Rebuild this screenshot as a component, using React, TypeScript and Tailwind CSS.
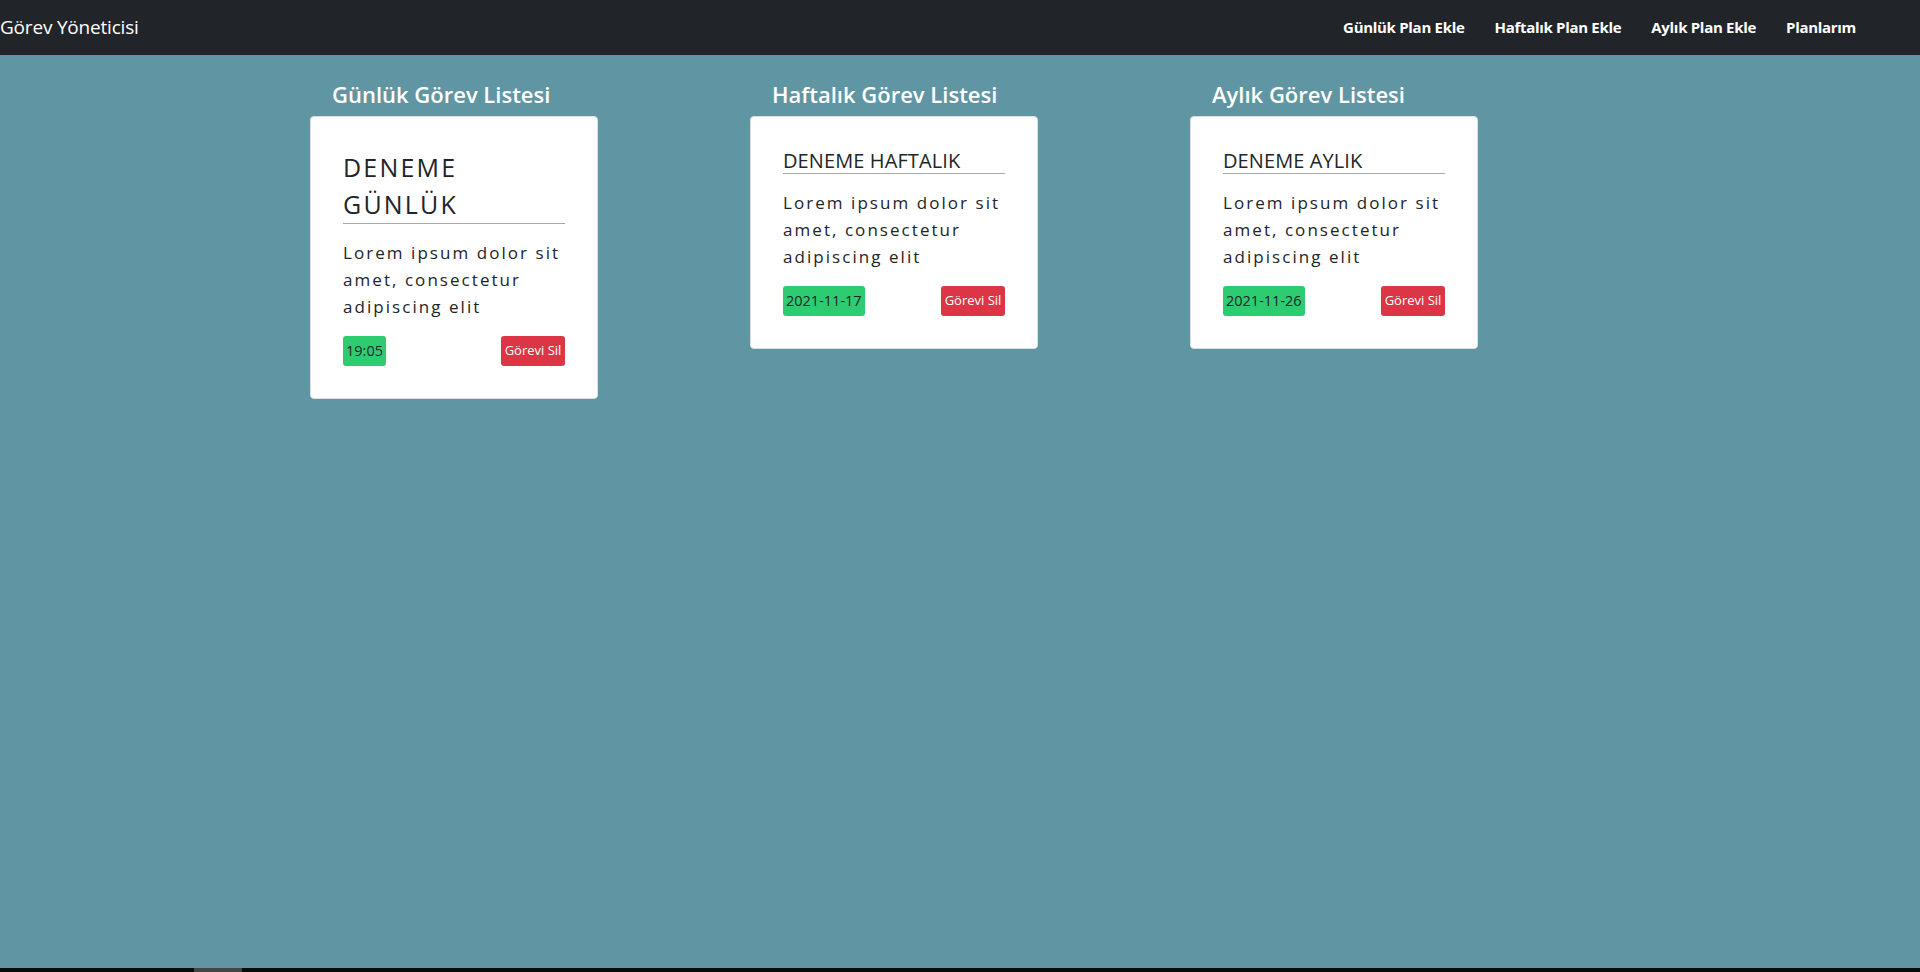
import React from 'react';

type Task = {
    title: string;
    description: string;
    badge: string;
};

type Column = {
    heading: string;
    big: boolean;
    tasks: Task[];
};

const lorem = "Lorem ipsum dolor sit amet, consectetur adipiscing elit";

const columns: Column[] = [
    { heading: "Günlük Görev Listesi", big: true, tasks: [{ title: "DENEME GÜNLÜK", description: lorem, badge: "19:05" }] },
    { heading: "Haftalık Görev Listesi", big: false, tasks: [{ title: "DENEME HAFTALIK", description: lorem, badge: "2021-11-17" }] },
    { heading: "Aylık Görev Listesi", big: false, tasks: [{ title: "DENEME AYLIK", description: lorem, badge: "2021-11-26" }] },
];

const links = ["Günlük Plan Ekle", "Haftalık Plan Ekle", "Aylık Plan Ekle", "Planlarım"];

const TaskCard = ({ task, big }: { task: Task; big: boolean }) => {
    return (
        <div className="w-[288px] bg-white border border-[#dcdfe2] rounded-[4px] px-[32px] pt-[32px] pb-[32px]">
            <h5
                className={
                    big
                        ? "text-[25px] leading-[37px] tracking-[2.2px] font-medium text-[#212529] border-b border-[#a9a9a9]"
                        : "text-[20px] leading-[24px] tracking-[0.1px] font-medium text-[#212529] border-b border-[#a9a9a9]"
                }
            >
                {task.title}
            </h5>
            <p className="mt-[15px] text-[17px] leading-[27px] tracking-[2.05px] text-[#212529]">
                {task.description}
            </p>
            <div className="mt-[16px] flex items-center justify-between">
                <span className="h-[30px] px-[3px] flex items-center rounded-[3px] bg-[#2ecc71] text-[14.5px] text-[#212529]">
                    {task.badge}
                </span>
                <button className="h-[30px] w-[64px] flex items-center justify-center rounded-[3px] bg-[#dc3545] text-[13px] text-white">
                    Görevi Sil
                </button>
            </div>
        </div>
    );
};

const App = () => {
    return (
        <div className="h-[972px] flex flex-col bg-[#6096a3] font-['Open_Sans',sans-serif] overflow-hidden">
            <nav className="h-[55px] shrink-0 bg-[#212529] flex items-center justify-between pr-[64px]">
                <a className="text-[19px] text-white tracking-[-0.2px]">Görev Yöneticisi</a>
                <ul className="flex items-center gap-[30px]">
                    {links.map(link => (
                        <li key={link} className="text-[15px] font-bold text-white tracking-[-0.3px]">
                            {link}
                        </li>
                    ))}
                </ul>
            </nav>

            <main className="flex-1 flex items-start gap-[152px] pl-[310px] pt-[26px]">
                {columns.map(col => (
                    <section key={col.heading} className="flex flex-col">
                        <h4 className="pl-[22px] text-[22px] leading-[26px] font-semibold text-white mb-[9px]">
                            {col.heading}
                        </h4>
                        {col.tasks.map(task => (
                            <TaskCard key={task.title} task={task} big={col.big} />
                        ))}
                    </section>
                ))}
            </main>

            <div className="h-[4px] shrink-0 bg-[#0b0b0b] flex">
                <div className="ml-[194px] w-[48px] bg-[#454545]" />
            </div>
        </div>
    );
};

export default App;
